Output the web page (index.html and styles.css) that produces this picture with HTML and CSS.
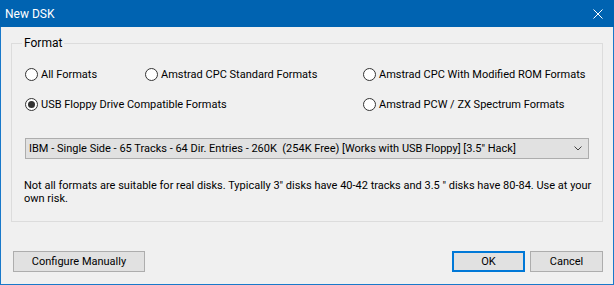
FILE: index.html
```html
<!DOCTYPE html>
<html lang="en">
<head>
    <meta charset="UTF-8">
    <title>New DSK</title>
    <link rel="stylesheet" href="styles.css">
</head>
<body>

    <div class="window">
        <div class="titlebar">
            <span class="title">New DSK</span>
            <span class="close">
                <svg width="10" height="10" viewBox="0 0 10 10">
                    <path d="M0.5 0.5 L9.5 9.5 M9.5 0.5 L0.5 9.5" stroke="#fff" stroke-width="1" fill="none"/>
                </svg>
            </span>
        </div>

        <div class="client">
            <fieldset class="group">
                <legend>Format</legend>

                <div class="radio-grid">
                    <label class="radio"><span class="dot"></span>All Formats</label>
                    <label class="radio"><span class="dot"></span>Amstrad CPC Standard Formats</label>
                    <label class="radio"><span class="dot"></span>Amstrad CPC With Modified ROM Formats</label>
                    <label class="radio checked span2"><span class="dot"></span>USB Floppy Drive Compatible Formats</label>
                    <label class="radio"><span class="dot"></span>Amstrad PCW / ZX Spectrum Formats</label>
                </div>

                <div class="combo">
                    <span>IBM - Single Side - 65 Tracks - 64 Dir. Entries - 260K &nbsp;(254K Free) [Works with USB Floppy] [3.5" Hack]</span>
                    <svg width="8" height="5" viewBox="0 0 8 5">
                        <path d="M0.5 0.5 L4 4 L7.5 0.5" stroke="#444" stroke-width="1" fill="none"/>
                    </svg>
                </div>

                <p class="note">Not all formats are suitable for real disks. Typically 3" disks have 40-42 tracks and 3.5 " disks have 80-84. Use at your own risk.</p>
            </fieldset>

            <div class="buttons">
                <button class="btn wide">Configure Manually</button>
                <div class="right">
                    <button class="btn default">OK</button>
                    <button class="btn">Cancel</button>
                </div>
            </div>
        </div>
    </div>

</body>
</html>
```

FILE: styles.css
```css
body {
    margin: 0;
    padding: 0;
    font-family: Roboto, "Noto Sans", sans-serif;
    font-size: 11px;
    color: #000;
    background: #f0f0f0;
}

.window {
    width: 614px;
    height: 285px;
    box-sizing: border-box;
    border: 1px solid #1979ca;
    border-top: none;
    background: #f0f0f0;
    display: flex;
    flex-direction: column;
}

.titlebar {
    height: 27px;
    margin: 0 -1px;
    background: #0063b1;
    color: #fff;
    display: flex;
    align-items: center;
    justify-content: space-between;
    padding: 0 11px 0 5px;
    flex-shrink: 0;
}

.title {
    font-size: 12px;
}

.close {
    display: flex;
}

.client {
    flex: 1;
    padding: 9px 10px 0 10px;
    display: flex;
    flex-direction: column;
}

.group {
    margin: 0;
    padding: 6px 4px 0 13px;
    border: 1px solid #dcdcdc;
    height: 186px;
    box-sizing: border-box;
    min-width: 0;
}

.group legend {
    padding: 0 2px;
    margin-left: -3px;
    line-height: 14px;
    font-size: 12px;
}

.radio-grid {
    display: grid;
    grid-template-columns: 120px 218px auto;
    row-gap: 13px;
    margin-top: 10px;
}

.span2 {
    grid-column: span 2;
}

.radio {
    display: flex;
    align-items: center;
    height: 17px;
    white-space: nowrap;
}

.dot {
    width: 11px;
    height: 11px;
    border: 1px solid #333;
    border-radius: 50%;
    background: #fff;
    margin-right: 3px;
    display: flex;
    align-items: center;
    justify-content: center;
    flex-shrink: 0;
}

.checked .dot::after {
    content: "";
    width: 7px;
    height: 7px;
    border-radius: 50%;
    background: #333;
}

.combo {
    margin-top: 25px;
    margin-right: 9px;
    height: 19px;
    border: 1px solid #adadad;
    background: #e1e1e1;
    display: flex;
    align-items: center;
    justify-content: space-between;
    padding: 0 6px 0 3px;
    white-space: nowrap;
}

.note {
    width: 572px;
    margin: 20px 0 0 -1px;
    line-height: 13px;
}

.buttons {
    display: flex;
    justify-content: space-between;
    margin-top: 29px;
    padding-left: 2px;
}

.right {
    display: flex;
    gap: 5px;
}

.btn {
    font-family: inherit;
    font-size: 11px;
    height: 21px;
    width: 73px;
    padding: 0;
    border: 1px solid #adadad;
    background: #e1e1e1;
    color: #000;
}

.btn.wide {
    width: 132px;
}

.btn.default {
    border: 2px solid #0078d7;
}
```
